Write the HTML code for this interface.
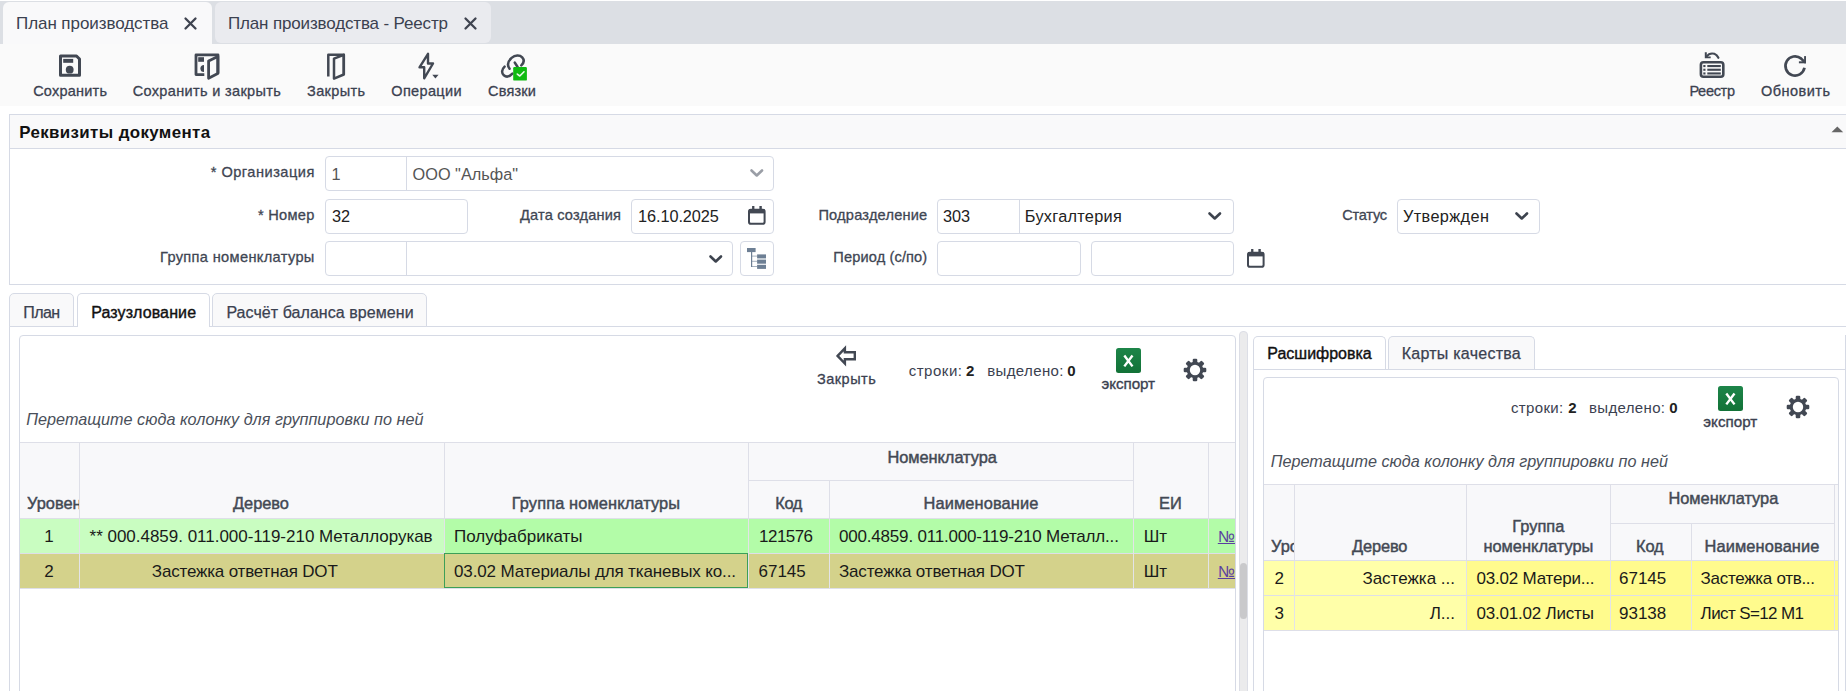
<!DOCTYPE html>
<html><head><meta charset="utf-8"><style>
html,body{margin:0;padding:0;}
body{width:1846px;height:691px;overflow:hidden;position:relative;background:#fff;font-family:"Liberation Sans",sans-serif;}
.a{position:absolute;}
.t{position:absolute;white-space:nowrap;}
svg{position:absolute;overflow:visible;}
</style></head><body>
<div class="a" style="left:0px;top:1px;width:1846px;height:43px;background:#dcdfe4;"></div>
<div class="a" style="left:3px;top:2px;width:209px;height:42px;background:#f9f9fa;border-radius:6px 6px 0 0;"></div>
<div class="a" style="left:215px;top:2px;width:276px;height:41px;background:#eaebef;border-radius:6px;"></div>
<div class="t" style="left:16.00px;top:14px;font-size:17px;line-height:19px;color:#3b4150;letter-spacing:-0.069px;">План производства</div>
<div class="t" style="left:228.00px;top:14px;font-size:17px;line-height:19px;color:#3b4150;letter-spacing:-0.156px;">План производства - Реестр</div>
<svg style="left:184px;top:17px" width="13" height="13"><path d="M1.5,1.5 L11.5,11.5 M11.5,1.5 L1.5,11.5" stroke="#3f4450" stroke-width="2.3" stroke-linecap="round"/></svg>
<svg style="left:464px;top:17px" width="13" height="13"><path d="M1.5,1.5 L11.5,11.5 M11.5,1.5 L1.5,11.5" stroke="#3f4450" stroke-width="2.3" stroke-linecap="round"/></svg>
<div class="a" style="left:0px;top:44px;width:1846px;height:62px;background:#fafafa;"></div>
<div class="t" style="left:33.20px;top:83px;font-size:14.5px;line-height:16px;color:#3b4150;letter-spacing:0.213px;-webkit-text-stroke:0.3px #3b4150;">Сохранить</div>
<div class="t" style="left:132.70px;top:83px;font-size:14.5px;line-height:16px;color:#3b4150;letter-spacing:0.344px;-webkit-text-stroke:0.3px #3b4150;">Сохранить и закрыть</div>
<div class="t" style="left:307.00px;top:83px;font-size:14.5px;line-height:16px;color:#3b4150;letter-spacing:0.367px;-webkit-text-stroke:0.3px #3b4150;">Закрыть</div>
<div class="t" style="left:391.30px;top:83px;font-size:14.5px;line-height:16px;color:#3b4150;letter-spacing:0.343px;-webkit-text-stroke:0.3px #3b4150;">Операции</div>
<div class="t" style="left:488.00px;top:83px;font-size:14.5px;line-height:16px;color:#3b4150;letter-spacing:0.200px;-webkit-text-stroke:0.3px #3b4150;">Связки</div>
<div class="t" style="left:1689.40px;top:83px;font-size:14.5px;line-height:16px;color:#3b4150;letter-spacing:-0.300px;-webkit-text-stroke:0.3px #3b4150;">Реестр</div>
<div class="t" style="left:1761.00px;top:83px;font-size:14.5px;line-height:16px;color:#3b4150;letter-spacing:0.471px;-webkit-text-stroke:0.3px #3b4150;">Обновить</div>
<svg style="left:0;top:0" width="1846" height="691"><g fill="none" stroke="#424853" stroke-width="3" stroke-linejoin="round"><path d="M60.5,56 H76.5 L79.5,59 V75.2 H60.5 Z"/><path d="M204.3,74.6 H196 V54.9 H218 V73.5" stroke-width="2.8"/><path d="M208.6,61 L217.8,56.5 V73.6 L208.6,78.2 Z" stroke-width="2.8"/><path d="M328.3,76.5 V54.8 H343.8 V74.5" stroke-width="2.5"/><path d="M334,58.6 L343.8,54.8 V74.5 L334,78.6 Z" stroke-width="2.5"/><path d="M428,53.8 V63.5 H433 L424.2,78.3 V67.3 H419.5 Z" stroke-width="2.4"/><path d="M509.6,68.8 C507.2,65.6 507.8,61.4 511.6,57.9 C515.2,54.8 519.8,54.8 522.2,57.4 C524.4,59.9 523.8,63 521.3,65.3" stroke-width="2.5" stroke-linecap="round"/><path d="M504.6,66.6 C501.6,69.4 501.4,73.2 503.8,75.3 C506.3,77.4 509.6,76.6 512.4,73.6" stroke-width="2.5" stroke-linecap="round"/><path d="M514.8,62.6 L517.6,67" stroke-width="2.6" stroke-linecap="round"/><rect x="1700.9" y="62.3" width="22.4" height="14.5" rx="2.5" stroke-width="2.6"/><path d="M1804.5,67.8 A9.6,9.6 0 1 1 1801.2,58.6 L1804.2,61.6" stroke-width="2.7"/><path d="M1718.4,57.8 C1716.5,53.8 1712.5,52.6 1709,54.2 L1706.5,56.5" stroke-width="2.2" stroke-linecap="round"/></g><g fill="#424853"><rect x="63.2" y="58.9" width="10" height="3.9"/><circle cx="69.7" cy="69.7" r="3.9"/><rect x="198.2" y="57.2" width="5.8" height="4.6"/><path d="M204,65 V72 A3.6,3.5 0 0 1 204,65 Z"/><path d="M432.3,74.8 H438.6 L435.4,78.4 Z"/><rect x="1703.3" y="65" width="2.2" height="2.1"/><rect x="1707.3" y="65" width="13.5" height="2.1"/><rect x="1703.3" y="68.7" width="2.2" height="2.1"/><rect x="1707.3" y="68.7" width="13.5" height="2.1"/><rect x="1703.3" y="72.4" width="2.2" height="2.1"/><rect x="1707.3" y="72.4" width="13.5" height="2.1"/><path d="M1704.8,52.2 H1706.8 V56.4 H1710.7 V58.3 H1704.8 Z"/><rect x="1804.1" y="56.1" width="1.9" height="7.2"/><rect x="1798.9" y="61.3" width="7.1" height="2"/></g><rect x="513.2" y="67" width="13.7" height="13.6" rx="1.2" fill="#0fba10"/><path d="M517.3,74.1 L519.8,76 L524,71.8" fill="none" stroke="#e9f9e9" stroke-width="1.6" stroke-linecap="round" stroke-linejoin="round"/></svg>
<div class="a" style="left:9px;top:114px;width:1850px;height:171px;background:#fff;border:1px solid #d6dae5;box-sizing:border-box;"></div>
<div class="a" style="left:10px;top:115px;width:1846px;height:33px;background:#f9f9fa;"></div>
<div class="a" style="left:10px;top:148px;width:1846px;height:1px;background:#d6dae5;"></div>
<div class="t" style="left:19.20px;top:123px;font-size:16.9px;line-height:19px;color:#111;font-weight:bold;letter-spacing:0.383px;">Реквизиты документа</div>
<svg style="left:1831px;top:126px" width="13" height="7"><path d="M0.5,6.3 L6.3,0.4 L12.2,6.3 Z" fill="#666"/></svg>
<div class="t" style="left:210.70px;top:164px;font-size:14.6px;line-height:16px;color:#404653;letter-spacing:0.492px;-webkit-text-stroke:0.3px #404653;">* Организация</div>
<div class="t" style="left:258.00px;top:207px;font-size:14.6px;line-height:16px;color:#404653;letter-spacing:0.283px;-webkit-text-stroke:0.3px #404653;">* Номер</div>
<div class="t" style="left:160.00px;top:249px;font-size:14.6px;line-height:16px;color:#404653;letter-spacing:0.344px;-webkit-text-stroke:0.3px #404653;">Группа номенклатуры</div>
<div class="t" style="left:520.00px;top:207px;font-size:14.6px;line-height:16px;color:#404653;letter-spacing:0.167px;-webkit-text-stroke:0.3px #404653;">Дата создания</div>
<div class="t" style="left:818.40px;top:207px;font-size:14.6px;line-height:16px;color:#404653;letter-spacing:0.208px;-webkit-text-stroke:0.3px #404653;">Подразделение</div>
<div class="t" style="left:833.30px;top:249px;font-size:14.6px;line-height:16px;color:#404653;letter-spacing:0.133px;-webkit-text-stroke:0.3px #404653;">Период (с/по)</div>
<div class="t" style="left:1342.30px;top:207px;font-size:14.6px;line-height:16px;color:#404653;letter-spacing:-0.260px;-webkit-text-stroke:0.3px #404653;">Статус</div>
<div class="a" style="left:325px;top:156px;width:449px;height:35px;background:#fff;border:1px solid #d6dae5;box-sizing:border-box;border-radius:4px;"></div>
<div class="a" style="left:406px;top:157px;width:1px;height:33px;background:#d6dae5;"></div>
<div class="a" style="left:325px;top:199px;width:143px;height:35px;background:#fff;border:1px solid #d6dae5;box-sizing:border-box;border-radius:4px;"></div>
<div class="a" style="left:325px;top:241px;width:408px;height:35px;background:#fff;border:1px solid #d6dae5;box-sizing:border-box;border-radius:4px;"></div>
<div class="a" style="left:406px;top:242px;width:1px;height:33px;background:#d6dae5;"></div>
<div class="a" style="left:740px;top:241px;width:34px;height:35px;background:#fff;border:1px solid #d6dae5;box-sizing:border-box;border-radius:4px;"></div>
<div class="a" style="left:631px;top:199px;width:143px;height:35px;background:#fff;border:1px solid #d6dae5;box-sizing:border-box;border-radius:4px;"></div>
<div class="a" style="left:937px;top:199px;width:297px;height:35px;background:#fff;border:1px solid #d6dae5;box-sizing:border-box;border-radius:4px;"></div>
<div class="a" style="left:1019px;top:200px;width:1px;height:33px;background:#d6dae5;"></div>
<div class="a" style="left:937px;top:241px;width:144px;height:35px;background:#fff;border:1px solid #d6dae5;box-sizing:border-box;border-radius:4px;"></div>
<div class="a" style="left:1091px;top:241px;width:143px;height:35px;background:#fff;border:1px solid #d6dae5;box-sizing:border-box;border-radius:4px;"></div>
<div class="a" style="left:1397px;top:199px;width:143px;height:35px;background:#fff;border:1px solid #d6dae5;box-sizing:border-box;border-radius:4px;"></div>
<div class="t" style="left:331.60px;top:165px;font-size:16.3px;line-height:18px;color:#555;">1</div>
<div class="t" style="left:412.60px;top:165px;font-size:16.3px;line-height:18px;color:#555;">ООО "Альфа"</div>
<div class="t" style="left:332.00px;top:207px;font-size:16.3px;line-height:18px;color:#222;">32</div>
<div class="t" style="left:638.00px;top:207px;font-size:16.3px;line-height:18px;color:#222;letter-spacing:-0.067px;">16.10.2025</div>
<div class="t" style="left:943.00px;top:207px;font-size:16.3px;line-height:18px;color:#222;">303</div>
<div class="t" style="left:1024.80px;top:207px;font-size:16.3px;line-height:18px;color:#222;letter-spacing:0.290px;">Бухгалтерия</div>
<div class="t" style="left:1403.00px;top:207px;font-size:16.3px;line-height:18px;color:#222;letter-spacing:0.387px;">Утвержден</div>
<svg style="left:749.6px;top:169.4px" width="13.5" height="8"><path d="M1.5,1.5 L6.75,6.5 L12.0,1.5" fill="none" stroke="#9a9ea6" stroke-width="2.6" stroke-linecap="round" stroke-linejoin="round"/></svg>
<svg style="left:708.7px;top:254.6px" width="13.5" height="8"><path d="M1.5,1.5 L6.75,6.5 L12.0,1.5" fill="none" stroke="#3d434e" stroke-width="2.6" stroke-linecap="round" stroke-linejoin="round"/></svg>
<svg style="left:1208.2px;top:212.3px" width="13.5" height="8"><path d="M1.5,1.5 L6.75,6.5 L12.0,1.5" fill="none" stroke="#3d434e" stroke-width="2.6" stroke-linecap="round" stroke-linejoin="round"/></svg>
<svg style="left:1515px;top:212.3px" width="13.5" height="8"><path d="M1.5,1.5 L6.75,6.5 L12.0,1.5" fill="none" stroke="#3d434e" stroke-width="2.6" stroke-linecap="round" stroke-linejoin="round"/></svg>
<svg style="left:748.2px;top:205.8px" width="18" height="19"><rect x="1" y="3.8" width="15.6" height="13.9" rx="1.8" fill="none" stroke="#424853" stroke-width="2"/><rect x="1" y="3" width="15.6" height="4.4" fill="#424853"/><rect x="4.1" y="0" width="2.3" height="4" fill="#424853"/><rect x="11.4" y="0" width="2.4" height="4" fill="#424853"/></svg>
<svg style="left:1246.8px;top:249px" width="18" height="19"><rect x="1" y="3.8" width="15.6" height="13.9" rx="1.8" fill="none" stroke="#424853" stroke-width="2"/><rect x="1" y="3" width="15.6" height="4.4" fill="#424853"/><rect x="4.1" y="0" width="2.3" height="4" fill="#424853"/><rect x="11.4" y="0" width="2.4" height="4" fill="#424853"/></svg>
<svg style="left:747px;top:247.5px" width="20" height="21"><g fill="#6d7f94"><rect x="0" y="0" width="8.6" height="4.1"/><rect x="4" y="4" width="1.2" height="15"/><rect x="5" y="7.6" width="5" height="1" opacity=".6"/><rect x="5" y="12.8" width="5" height="1" opacity=".6"/><rect x="5" y="18" width="5" height="1" opacity=".6"/><rect x="10.1" y="6.4" width="8.9" height="4"/><rect x="10.1" y="11.6" width="8.9" height="4.1"/><rect x="10.1" y="16.8" width="8.9" height="4.1"/></g></svg>
<div class="a" style="left:9px;top:326px;width:1850px;height:400px;background:#fff;border:1px solid #d6dae5;box-sizing:border-box;"></div>
<div class="a" style="left:9px;top:293px;width:65px;height:34px;background:#f9f9fa;border:1px solid #d6dae5;box-sizing:border-box;border-radius:5px 5px 0 0;"></div>
<div class="a" style="left:77px;top:293px;width:133px;height:34px;background:#fff;border:1px solid #d6dae5;border-bottom:none;box-sizing:border-box;border-radius:5px 5px 0 0;"></div>
<div class="a" style="left:212px;top:293px;width:215px;height:34px;background:#f9f9fa;border:1px solid #d6dae5;box-sizing:border-box;border-radius:5px 5px 0 0;"></div>
<div class="t" style="left:23.20px;top:304px;font-size:16px;line-height:17px;color:#3b4150;letter-spacing:-0.533px;-webkit-text-stroke:0.25px #3b4150;">План</div>
<div class="t" style="left:91.20px;top:304px;font-size:16px;line-height:17px;color:#111;letter-spacing:0.127px;-webkit-text-stroke:0.4px #111;">Разузлование</div>
<div class="t" style="left:226.40px;top:304px;font-size:16px;line-height:17px;color:#3b4150;letter-spacing:0.062px;-webkit-text-stroke:0.25px #3b4150;">Расчёт баланса времени</div>
<div class="a" style="left:19px;top:335px;width:1217px;height:400px;background:#fff;border:1px solid #d6dae5;box-sizing:border-box;border-radius:4px;"></div>
<svg style="left:0;top:0" width="1846" height="691"><path d="M837.6,355.9 L844.9,348.3 V352.3 H854.8 V359.2 H844.9 V363.6 Z" fill="none" stroke="#424853" stroke-width="2.4" stroke-linejoin="miter"/></svg>
<div class="t" style="left:817.00px;top:371px;font-size:14.5px;line-height:16px;color:#3b4150;letter-spacing:0.483px;-webkit-text-stroke:0.3px #3b4150;">Закрыть</div>
<div class="t" style="left:908.70px;top:362px;font-size:15px;line-height:17px;color:#3b4150;letter-spacing:0.517px;">строки:</div>
<div class="t" style="left:965.90px;top:362px;font-size:15px;line-height:17px;color:#222;font-weight:bold;">2</div>
<div class="t" style="left:987.20px;top:362px;font-size:15px;line-height:17px;color:#3b4150;letter-spacing:0.375px;">выделено:</div>
<div class="t" style="left:1067.30px;top:362px;font-size:15px;line-height:17px;color:#222;font-weight:bold;">0</div>
<div class="a" style="left:1115.5px;top:348.3px;width:25px;height:25px;border-radius:2.5px;background:linear-gradient(#1d8549,#127237);"></div>
<svg style="left:1115.5px;top:348.3px" width="25" height="25"><path d="M8.3,7.5 L16.5,18.4 M16.5,7.5 L8.3,18.4" stroke="#fff" stroke-width="2.4"/></svg>
<div class="t" style="left:1101.60px;top:375px;font-size:15.2px;line-height:17px;color:#3b4150;letter-spacing:-0.083px;-webkit-text-stroke:0.35px #3b4150;">экспорт</div>
<svg style="left:1182.9px;top:357.9px" width="24" height="24"><g transform="translate(12,12)" fill="#424853"><rect x="-2.3" y="-11.3" width="4.6" height="6" rx="1.2" transform="rotate(0)"/><rect x="-2.3" y="-11.3" width="4.6" height="6" rx="1.2" transform="rotate(45)"/><rect x="-2.3" y="-11.3" width="4.6" height="6" rx="1.2" transform="rotate(90)"/><rect x="-2.3" y="-11.3" width="4.6" height="6" rx="1.2" transform="rotate(135)"/><rect x="-2.3" y="-11.3" width="4.6" height="6" rx="1.2" transform="rotate(180)"/><rect x="-2.3" y="-11.3" width="4.6" height="6" rx="1.2" transform="rotate(225)"/><rect x="-2.3" y="-11.3" width="4.6" height="6" rx="1.2" transform="rotate(270)"/><rect x="-2.3" y="-11.3" width="4.6" height="6" rx="1.2" transform="rotate(315)"/><circle r="8.3"/><circle r="5.2" fill="#fff"/></g></svg>
<div class="t" style="left:26.30px;top:410px;font-size:16.2px;line-height:18px;color:#4a4f5a;font-style:italic;letter-spacing:0.018px;">Перетащите сюда колонку для группировки по ней</div>
<div class="a" style="left:20px;top:442px;width:1215px;height:1px;background:#dedfe8;"></div>
<div class="a" style="left:20px;top:443px;width:1215px;height:75px;background:#f8f8fa;"></div>
<div class="a" style="left:79px;top:443px;width:1px;height:145px;background:#dedfe8;"></div>
<div class="a" style="left:444px;top:443px;width:1px;height:145px;background:#dedfe8;"></div>
<div class="a" style="left:748px;top:443px;width:1px;height:145px;background:#dedfe8;"></div>
<div class="a" style="left:1133px;top:443px;width:1px;height:145px;background:#dedfe8;"></div>
<div class="a" style="left:1208px;top:443px;width:1px;height:145px;background:#dedfe8;"></div>
<div class="a" style="left:829px;top:481px;width:1px;height:107px;background:#dedfe8;"></div>
<div class="a" style="left:749px;top:480px;width:384px;height:1px;background:#dedfe8;"></div>
<div class="a" style="left:20px;top:518px;width:1215px;height:1px;background:#dedfe8;"></div>
<div class="a" style="left:20px;top:519px;width:59px;height:34px;background:#c9fdc1;"></div>
<div class="a" style="left:80px;top:519px;width:364px;height:34px;background:#c9fdc1;"></div>
<div class="a" style="left:445px;top:519px;width:303px;height:34px;background:#b3fca8;"></div>
<div class="a" style="left:749px;top:519px;width:80px;height:34px;background:#b3fca8;"></div>
<div class="a" style="left:830px;top:519px;width:303px;height:34px;background:#b3fca8;"></div>
<div class="a" style="left:1134px;top:519px;width:74px;height:34px;background:#b3fca8;"></div>
<div class="a" style="left:1209px;top:519px;width:26px;height:34px;background:#b3fca8;"></div>
<div class="a" style="left:20px;top:553px;width:1215px;height:1px;background:#dedfe8;"></div>
<div class="a" style="left:20px;top:554px;width:1215px;height:34px;background:#d4d28b;"></div>
<div class="a" style="left:79px;top:519px;width:1px;height:69px;background:#e3e3e8;"></div>
<div class="a" style="left:444px;top:519px;width:1px;height:69px;background:#e3e3e8;"></div>
<div class="a" style="left:748px;top:519px;width:1px;height:69px;background:#e3e3e8;"></div>
<div class="a" style="left:829px;top:519px;width:1px;height:69px;background:#e3e3e8;"></div>
<div class="a" style="left:1133px;top:519px;width:1px;height:69px;background:#e3e3e8;"></div>
<div class="a" style="left:1208px;top:519px;width:1px;height:69px;background:#e3e3e8;"></div>
<div class="a" style="left:20px;top:588px;width:1215px;height:1px;background:#dedfe8;"></div>
<div class="a" style="left:444px;top:553px;width:304px;height:35px;border:1px solid #3c9f58;box-sizing:border-box;"></div>
<div class="t" style="left:27.00px;top:494px;font-size:16.4px;line-height:18px;color:#434954;-webkit-text-stroke:0.45px #434954;width:52px;overflow:hidden;">Уровень</div>
<div class="t" style="left:233.00px;top:494px;font-size:16.4px;line-height:18px;color:#434954;letter-spacing:-0.020px;-webkit-text-stroke:0.45px #434954;">Дерево</div>
<div class="t" style="left:511.75px;top:494px;font-size:16.4px;line-height:18px;color:#434954;letter-spacing:0.111px;-webkit-text-stroke:0.45px #434954;">Группа номенклатуры</div>
<div class="t" style="left:775.15px;top:494px;font-size:16.4px;line-height:18px;color:#434954;letter-spacing:-0.300px;-webkit-text-stroke:0.45px #434954;">Код</div>
<div class="t" style="left:923.60px;top:494px;font-size:16.4px;line-height:18px;color:#434954;letter-spacing:0.100px;-webkit-text-stroke:0.45px #434954;">Наименование</div>
<div class="t" style="left:1159.05px;top:494px;font-size:16.4px;line-height:18px;color:#434954;-webkit-text-stroke:0.45px #434954;">ЕИ</div>
<div class="t" style="left:887.40px;top:448px;font-size:16.4px;line-height:18px;color:#434954;letter-spacing:-0.045px;-webkit-text-stroke:0.45px #434954;">Номенклатура</div>
<div class="t" style="left:44.25px;top:527px;font-size:17px;line-height:19px;color:#1a1a1a;">1</div>
<div class="t" style="left:89.60px;top:527px;font-size:17px;line-height:19px;color:#1a1a1a;letter-spacing:-0.020px;">** 000.4859. 011.000-119-210 Металлорукав</div>
<div class="t" style="left:454.00px;top:527px;font-size:17px;line-height:19px;color:#1a1a1a;">Полуфабрикаты</div>
<div class="t" style="left:759.10px;top:527px;font-size:17px;line-height:19px;color:#1a1a1a;letter-spacing:-0.560px;">121576</div>
<div class="t" style="left:839.00px;top:527px;font-size:17px;line-height:19px;color:#1a1a1a;letter-spacing:-0.191px;">000.4859. 011.000-119-210 Металл...</div>
<div class="t" style="left:1143.70px;top:527px;font-size:17px;line-height:19px;color:#1a1a1a;">Шт</div>
<div class="t" style="left:44.25px;top:562px;font-size:17px;line-height:19px;color:#1a1a1a;">2</div>
<div class="t" style="left:151.80px;top:562px;font-size:17px;line-height:19px;color:#1a1a1a;letter-spacing:-0.175px;">Застежка ответная DOT</div>
<div class="t" style="left:454.00px;top:562px;font-size:17px;line-height:19px;color:#1a1a1a;letter-spacing:-0.133px;">03.02 Материалы для тканевых ко...</div>
<div class="t" style="left:758.50px;top:562px;font-size:17px;line-height:19px;color:#1a1a1a;">67145</div>
<div class="t" style="left:839.00px;top:562px;font-size:17px;line-height:19px;color:#1a1a1a;letter-spacing:-0.175px;">Застежка ответная DOT</div>
<div class="t" style="left:1143.70px;top:562px;font-size:17px;line-height:19px;color:#1a1a1a;">Шт</div>
<div class="t" style="left:1217.80px;top:528px;font-size:16px;line-height:17px;color:#5a3fa0;text-decoration:underline;">№</div>
<div class="t" style="left:1217.80px;top:563px;font-size:16px;line-height:17px;color:#5a3fa0;text-decoration:underline;">№</div>
<div class="a" style="left:1236px;top:440px;width:3px;height:260px;background:#fff;"></div>
<div class="a" style="left:1239px;top:331px;width:9px;height:370px;background:#ebebec;border:1px solid #dcdee6;box-sizing:border-box;border-radius:4px 4px 0 0;"></div>
<div class="a" style="left:1240px;top:563px;width:7px;height:56px;background:#c9c9cb;border-radius:4px;"></div>
<div class="a" style="left:1253px;top:369px;width:600px;height:400px;background:#fff;border:1px solid #d6dae5;box-sizing:border-box;"></div>
<div class="a" style="left:1253px;top:336px;width:133px;height:33px;background:#fff;border:1px solid #d6dae5;border-bottom:none;box-sizing:border-box;border-radius:5px 5px 0 0;"></div>
<div class="a" style="left:1388px;top:336px;width:147px;height:33px;background:#f9f9fa;border:1px solid #d6dae5;border-bottom:none;box-sizing:border-box;border-radius:5px 5px 0 0;"></div>
<div class="t" style="left:1267.30px;top:345px;font-size:16px;line-height:17px;color:#111;letter-spacing:-0.010px;-webkit-text-stroke:0.4px #111;">Расшифровка</div>
<div class="t" style="left:1401.70px;top:345px;font-size:16px;line-height:17px;color:#3b4150;letter-spacing:0.254px;-webkit-text-stroke:0.25px #3b4150;">Карты качества</div>
<div class="a" style="left:1263px;top:377px;width:576px;height:400px;background:#fff;border:1px solid #d6dae5;box-sizing:border-box;border-radius:4px;"></div>
<div class="t" style="left:1511.00px;top:399px;font-size:15px;line-height:17px;color:#3b4150;letter-spacing:0.350px;">строки:</div>
<div class="t" style="left:1568.30px;top:399px;font-size:15px;line-height:17px;color:#222;font-weight:bold;">2</div>
<div class="t" style="left:1589.00px;top:399px;font-size:15px;line-height:17px;color:#3b4150;letter-spacing:0.350px;">выделено:</div>
<div class="t" style="left:1669.30px;top:399px;font-size:15px;line-height:17px;color:#222;font-weight:bold;">0</div>
<div class="a" style="left:1718.3px;top:386.2px;width:25px;height:25px;border-radius:2.5px;background:linear-gradient(#1d8549,#127237);"></div>
<svg style="left:1718.3px;top:386.2px" width="25" height="25"><path d="M8.3,7.5 L16.5,18.4 M16.5,7.5 L8.3,18.4" stroke="#fff" stroke-width="2.4"/></svg>
<div class="t" style="left:1703.30px;top:413px;font-size:15.2px;line-height:17px;color:#3b4150;letter-spacing:0.017px;-webkit-text-stroke:0.35px #3b4150;">экспорт</div>
<svg style="left:1785.5px;top:395.2px" width="24" height="24"><g transform="translate(12,12)" fill="#424853"><rect x="-2.3" y="-11.3" width="4.6" height="6" rx="1.2" transform="rotate(0)"/><rect x="-2.3" y="-11.3" width="4.6" height="6" rx="1.2" transform="rotate(45)"/><rect x="-2.3" y="-11.3" width="4.6" height="6" rx="1.2" transform="rotate(90)"/><rect x="-2.3" y="-11.3" width="4.6" height="6" rx="1.2" transform="rotate(135)"/><rect x="-2.3" y="-11.3" width="4.6" height="6" rx="1.2" transform="rotate(180)"/><rect x="-2.3" y="-11.3" width="4.6" height="6" rx="1.2" transform="rotate(225)"/><rect x="-2.3" y="-11.3" width="4.6" height="6" rx="1.2" transform="rotate(270)"/><rect x="-2.3" y="-11.3" width="4.6" height="6" rx="1.2" transform="rotate(315)"/><circle r="8.3"/><circle r="5.2" fill="#fff"/></g></svg>
<div class="t" style="left:1270.70px;top:452px;font-size:16.2px;line-height:18px;color:#4a4f5a;font-style:italic;letter-spacing:0.018px;">Перетащите сюда колонку для группировки по ней</div>
<div class="a" style="left:1264px;top:484px;width:574px;height:1px;background:#dedfe8;"></div>
<div class="a" style="left:1264px;top:485px;width:574px;height:75px;background:#f8f8fa;"></div>
<div class="a" style="left:1294px;top:485px;width:1px;height:145px;background:#dedfe8;"></div>
<div class="a" style="left:1466px;top:485px;width:1px;height:145px;background:#dedfe8;"></div>
<div class="a" style="left:1610px;top:485px;width:1px;height:145px;background:#dedfe8;"></div>
<div class="a" style="left:1834px;top:485px;width:1px;height:145px;background:#dedfe8;"></div>
<div class="a" style="left:1691px;top:524px;width:1px;height:106px;background:#dedfe8;"></div>
<div class="a" style="left:1611px;top:523px;width:223px;height:1px;background:#dedfe8;"></div>
<div class="a" style="left:1264px;top:560px;width:574px;height:1px;background:#dedfe8;"></div>
<div class="a" style="left:1264px;top:561px;width:30px;height:34px;background:#ffffa9;"></div>
<div class="a" style="left:1295px;top:561px;width:171px;height:34px;background:#ffffa9;"></div>
<div class="a" style="left:1467px;top:561px;width:371px;height:34px;background:#fffb8d;"></div>
<div class="a" style="left:1264px;top:595px;width:574px;height:1px;background:#dedfe8;"></div>
<div class="a" style="left:1264px;top:596px;width:30px;height:34px;background:#ffffa9;"></div>
<div class="a" style="left:1295px;top:596px;width:171px;height:34px;background:#ffffa9;"></div>
<div class="a" style="left:1467px;top:596px;width:371px;height:34px;background:#fffb8d;"></div>
<div class="a" style="left:1294px;top:561px;width:1px;height:69px;background:#e3e3e8;"></div>
<div class="a" style="left:1466px;top:561px;width:1px;height:69px;background:#e3e3e8;"></div>
<div class="a" style="left:1610px;top:561px;width:1px;height:69px;background:#e3e3e8;"></div>
<div class="a" style="left:1691px;top:561px;width:1px;height:69px;background:#e3e3e8;"></div>
<div class="a" style="left:1834px;top:561px;width:1px;height:69px;background:#e3e3e8;"></div>
<div class="a" style="left:1264px;top:630px;width:574px;height:1px;background:#dedfe8;"></div>
<div class="t" style="left:1271.00px;top:537px;font-size:16.4px;line-height:18px;color:#434954;-webkit-text-stroke:0.45px #434954;width:23px;overflow:hidden;">Уровень</div>
<div class="t" style="left:1352.00px;top:537px;font-size:16.4px;line-height:18px;color:#434954;letter-spacing:-0.140px;-webkit-text-stroke:0.45px #434954;">Дерево</div>
<div class="t" style="left:1512.35px;top:517px;font-size:16.4px;line-height:18px;color:#434954;-webkit-text-stroke:0.45px #434954;">Группа</div>
<div class="t" style="left:1483.45px;top:537px;font-size:16.4px;line-height:18px;color:#434954;-webkit-text-stroke:0.45px #434954;">номенклатуры</div>
<div class="t" style="left:1668.40px;top:489px;font-size:16.4px;line-height:18px;color:#434954;letter-spacing:-0.009px;-webkit-text-stroke:0.45px #434954;">Номенклатура</div>
<div class="t" style="left:1636.05px;top:537px;font-size:16.4px;line-height:18px;color:#434954;letter-spacing:-0.200px;-webkit-text-stroke:0.45px #434954;">Код</div>
<div class="t" style="left:1704.50px;top:537px;font-size:16.4px;line-height:18px;color:#434954;letter-spacing:0.118px;-webkit-text-stroke:0.45px #434954;">Наименование</div>
<div class="t" style="left:1274.50px;top:569px;font-size:17px;line-height:19px;color:#1a1a1a;">2</div>
<div class="t" style="left:1362.40px;top:569px;font-size:17px;line-height:19px;color:#1a1a1a;">Застежка ...</div>
<div class="t" style="left:1476.40px;top:569px;font-size:17px;line-height:19px;color:#1a1a1a;letter-spacing:-0.193px;">03.02 Матери...</div>
<div class="t" style="left:1619.00px;top:569px;font-size:17px;line-height:19px;color:#1a1a1a;">67145</div>
<div class="t" style="left:1700.60px;top:569px;font-size:17px;line-height:19px;color:#1a1a1a;letter-spacing:-0.293px;">Застежка отв...</div>
<div class="t" style="left:1274.50px;top:604px;font-size:17px;line-height:19px;color:#1a1a1a;">3</div>
<div class="t" style="left:1429.70px;top:604px;font-size:17px;line-height:19px;color:#1a1a1a;">Л...</div>
<div class="t" style="left:1476.40px;top:604px;font-size:17px;line-height:19px;color:#1a1a1a;letter-spacing:-0.200px;">03.01.02 Листы</div>
<div class="t" style="left:1619.00px;top:604px;font-size:17px;line-height:19px;color:#1a1a1a;">93138</div>
<div class="t" style="left:1700.60px;top:604px;font-size:17px;line-height:19px;color:#1a1a1a;letter-spacing:-0.609px;">Лист S=12 M1</div>
<div class="a" style="left:1845px;top:335px;width:1px;height:400px;background:#d6dae5;"></div>
</body></html>
